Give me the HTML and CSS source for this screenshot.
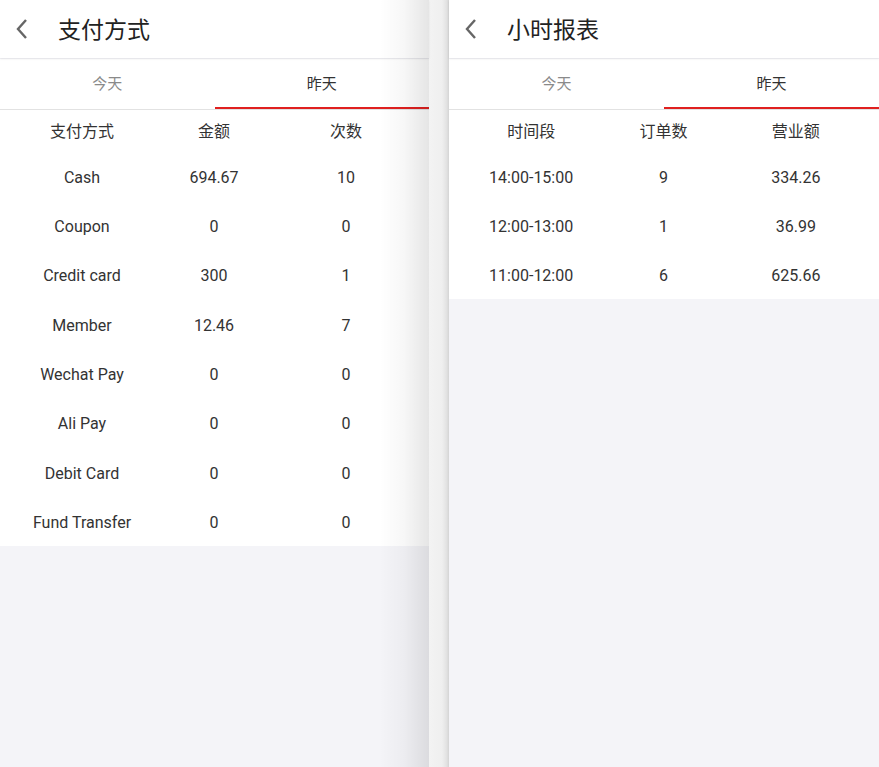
FILE: index.html
```html
<!DOCTYPE html>
<html>
<head>
<meta charset="utf-8">
<link rel="stylesheet" href="styles.css">
</head>
<body>

<div class="screen left">
  <div class="topbar">
    <svg class="back" width="14" height="20" viewBox="0 0 14 20"><path d="M11 1 L3 10 L11 19" fill="none" stroke="#666" stroke-width="2.4"/></svg>
    <span class="title">支付方式</span>
  </div>
  <div class="tabs">
    <div class="tab">今天</div>
    <div class="tab active">昨天</div>
  </div>
  <div class="table">
    <div class="row head"><span>支付方式</span><span>金额</span><span>次数</span></div>
    <div class="row"><span>Cash</span><span>694.67</span><span>10</span></div>
    <div class="row"><span>Coupon</span><span>0</span><span>0</span></div>
    <div class="row"><span>Credit card</span><span>300</span><span>1</span></div>
    <div class="row"><span>Member</span><span>12.46</span><span>7</span></div>
    <div class="row"><span>Wechat Pay</span><span>0</span><span>0</span></div>
    <div class="row"><span>Ali Pay</span><span>0</span><span>0</span></div>
    <div class="row"><span>Debit Card</span><span>0</span><span>0</span></div>
    <div class="row"><span>Fund Transfer</span><span>0</span><span>0</span></div>
  </div>
</div>

<div class="divider"></div>

<div class="screen right">
  <div class="topbar">
    <svg class="back" width="14" height="20" viewBox="0 0 14 20"><path d="M11 1 L3 10 L11 19" fill="none" stroke="#666" stroke-width="2.4"/></svg>
    <span class="title">小时报表</span>
  </div>
  <div class="tabs">
    <div class="tab">今天</div>
    <div class="tab active">昨天</div>
  </div>
  <div class="table">
    <div class="row head"><span>时间段</span><span>订单数</span><span>营业额</span></div>
    <div class="row"><span>14:00-15:00</span><span>9</span><span>334.26</span></div>
    <div class="row"><span>12:00-13:00</span><span>1</span><span>36.99</span></div>
    <div class="row"><span>11:00-12:00</span><span>6</span><span>625.66</span></div>
  </div>
</div>

</body>
</html>
```

FILE: styles.css
```css
body {
  margin: 0;
  display: flex;
  height: 767px;
  overflow: hidden;
  font-family: Roboto, "Noto Sans CJK SC", sans-serif;
  color: #333;
  background: #f4f4f8;
}

.screen {
  position: relative;
  height: 767px;
  background: #f4f4f8;
}

.left {
  width: 429px;
}

.right {
  width: 430px;
}

/* shadow of the left page falling on its own right edge */
.left::after {
  content: "";
  position: absolute;
  top: 0;
  right: 0;
  width: 50px;
  height: 100%;
  background: linear-gradient(to right, rgba(0,0,0,0), rgba(0,0,0,0.03) 50%, rgba(0,0,0,0.1));
}

.divider {
  width: 20px;
  height: 767px;
  background: linear-gradient(to right, #f3f3f3, #efefef 65%, #e2e2e2 88%, #d4d4d4);
}

.topbar {
  height: 58px;
  background: white;
  display: flex;
  align-items: center;
  box-shadow: 0 1px 2px rgba(0,0,0,0.08);
  position: relative;
}

.back {
  margin-left: 15px;
}

.title {
  margin-left: 29px;
  font-size: 23px;
  color: #222;
  margin-top: -2px;
}

.tabs {
  margin-top: 1px;
  height: 50px;
  display: flex;
  background: white;
  border-bottom: 1px solid #e2e2e2;
}

.tab {
  flex: 1;
  text-align: center;
  font-size: 15px;
  line-height: 50px;
  height: 48px;
  color: #8a8a8a;
  border-bottom: 2px solid transparent;
}

.tab.active {
  color: #333;
  border-bottom-color: #e0201f;
}

.table {
  background: white;
  padding: 0 17px 1px 16px;
}

.row {
  display: flex;
  box-sizing: border-box;
  height: 49.35px;
  padding-top: 5px;
  align-items: center;
  font-size: 16px;
}

.row span {
  flex: 1;
  text-align: center;
}

.row.head {
  height: 40px;
  padding-top: 0;
}
```
